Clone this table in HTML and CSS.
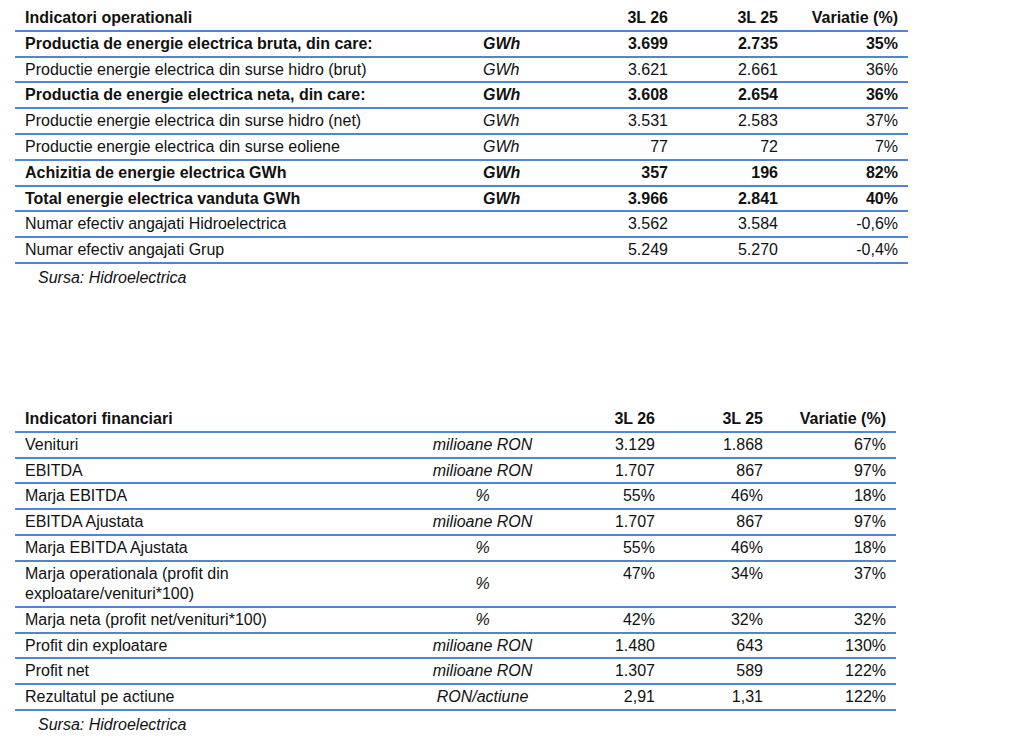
FILE: index.html
```html
<!DOCTYPE html>
<html lang="ro">
<head>
  <meta charset="UTF-8">
  <meta name="viewport" content="width=device-width, initial-scale=1.0">
  <title>Hidroelectrica - Indicatori</title>
  <link rel="stylesheet" href="styles.css">
</head>
<body>
  <!-- Indicatori operationali -->
  <section class="block block-operational">
    <table class="indicators operational">
      <colgroup>
        <col class="c-label">
        <col class="c-unit">
        <col class="c-cur">
        <col class="c-prev">
        <col class="c-var">
      </colgroup>
      <thead>
        <tr>
          <th class="label">Indicatori operationali</th>
          <th></th>
          <th class="num">3L 26</th>
          <th class="num">3L 25</th>
          <th class="num">Variatie (%)</th>
        </tr>
      </thead>
      <tbody>
        <tr class="strong">
          <td class="label">Productia de energie electrica bruta, din care:</td>
          <td class="unit">GWh</td>
          <td class="num">3.699</td>
          <td class="num">2.735</td>
          <td class="num">35%</td>
        </tr>
        <tr>
          <td class="label">Productie energie electrica din surse hidro (brut)</td>
          <td class="unit">GWh</td>
          <td class="num">3.621</td>
          <td class="num">2.661</td>
          <td class="num">36%</td>
        </tr>
        <tr class="strong">
          <td class="label">Productia de energie electrica neta, din care:</td>
          <td class="unit">GWh</td>
          <td class="num">3.608</td>
          <td class="num">2.654</td>
          <td class="num">36%</td>
        </tr>
        <tr>
          <td class="label">Productie energie electrica din surse hidro (net)</td>
          <td class="unit">GWh</td>
          <td class="num">3.531</td>
          <td class="num">2.583</td>
          <td class="num">37%</td>
        </tr>
        <tr>
          <td class="label">Productie energie electrica din surse eoliene</td>
          <td class="unit">GWh</td>
          <td class="num">77</td>
          <td class="num">72</td>
          <td class="num">7%</td>
        </tr>
        <tr class="strong">
          <td class="label">Achizitia de energie electrica GWh</td>
          <td class="unit">GWh</td>
          <td class="num">357</td>
          <td class="num">196</td>
          <td class="num">82%</td>
        </tr>
        <tr class="strong">
          <td class="label">Total energie electrica vanduta GWh</td>
          <td class="unit">GWh</td>
          <td class="num">3.966</td>
          <td class="num">2.841</td>
          <td class="num">40%</td>
        </tr>
        <tr>
          <td class="label">Numar efectiv angajati Hidroelectrica</td>
          <td class="unit"></td>
          <td class="num">3.562</td>
          <td class="num">3.584</td>
          <td class="num">-0,6%</td>
        </tr>
        <tr>
          <td class="label">Numar efectiv angajati Grup</td>
          <td class="unit"></td>
          <td class="num">5.249</td>
          <td class="num">5.270</td>
          <td class="num">-0,4%</td>
        </tr>
      </tbody>
    </table>
    <p class="source">Sursa: Hidroelectrica</p>
  </section>

  <!-- Indicatori financiari -->
  <section class="block block-financial">
    <table class="indicators financial">
      <colgroup>
        <col class="c-label">
        <col class="c-unit">
        <col class="c-cur">
        <col class="c-prev">
        <col class="c-var">
      </colgroup>
      <thead>
        <tr>
          <th class="label">Indicatori financiari</th>
          <th></th>
          <th class="num">3L 26</th>
          <th class="num">3L 25</th>
          <th class="num">Variatie (%)</th>
        </tr>
      </thead>
      <tbody>
        <tr>
          <td class="label">Venituri</td>
          <td class="unit">milioane RON</td>
          <td class="num">3.129</td>
          <td class="num">1.868</td>
          <td class="num">67%</td>
        </tr>
        <tr>
          <td class="label">EBITDA</td>
          <td class="unit">milioane RON</td>
          <td class="num">1.707</td>
          <td class="num">867</td>
          <td class="num">97%</td>
        </tr>
        <tr>
          <td class="label">Marja EBITDA</td>
          <td class="unit">%</td>
          <td class="num">55%</td>
          <td class="num">46%</td>
          <td class="num">18%</td>
        </tr>
        <tr>
          <td class="label">EBITDA Ajustata</td>
          <td class="unit">milioane RON</td>
          <td class="num">1.707</td>
          <td class="num">867</td>
          <td class="num">97%</td>
        </tr>
        <tr>
          <td class="label">Marja EBITDA Ajustata</td>
          <td class="unit">%</td>
          <td class="num">55%</td>
          <td class="num">46%</td>
          <td class="num">18%</td>
        </tr>
        <tr class="tall">
          <td class="label">Marja operationala (profit din<br>exploatare/venituri*100)</td>
          <td class="unit">%</td>
          <td class="num top">47%</td>
          <td class="num top">34%</td>
          <td class="num top">37%</td>
        </tr>
        <tr>
          <td class="label">Marja neta (profit net/venituri*100)</td>
          <td class="unit">%</td>
          <td class="num">42%</td>
          <td class="num">32%</td>
          <td class="num">32%</td>
        </tr>
        <tr>
          <td class="label">Profit din exploatare</td>
          <td class="unit">milioane RON</td>
          <td class="num">1.480</td>
          <td class="num">643</td>
          <td class="num">130%</td>
        </tr>
        <tr>
          <td class="label">Profit net</td>
          <td class="unit">milioane RON</td>
          <td class="num">1.307</td>
          <td class="num">589</td>
          <td class="num">122%</td>
        </tr>
        <tr>
          <td class="label">Rezultatul pe actiune</td>
          <td class="unit">RON/actiune</td>
          <td class="num">2,91</td>
          <td class="num">1,31</td>
          <td class="num">122%</td>
        </tr>
      </tbody>
    </table>
    <p class="source">Sursa: Hidroelectrica</p>
  </section>
</body>
</html>
```

FILE: styles.css
```css
/* General Styles */
body {
  margin: 0;
  padding: 6px 0 0 15px;
  font-family: 'Liberation Sans', Arial, sans-serif;
  font-size: 16px;
  color: #111;
  background: #fff;
}

.block-financial {
  margin-top: 118px;
}

.indicators {
  border-collapse: collapse;
  table-layout: fixed;
}

.indicators th,
.indicators td {
  padding: 2px 10px;
  line-height: 19.8px;
  border-bottom: 2px solid #5285cf;
  white-space: nowrap;
  vertical-align: middle;
}

.indicators th {
  font-weight: bold;
  text-align: left;
}

.indicators .num {
  text-align: right;
}

.indicators .unit {
  font-style: italic;
}

.indicators tr.strong td {
  font-weight: bold;
}

/* Operational table columns */
.operational {
  width: 893px;
}

.operational .c-label { width: 458px; }
.operational .c-unit { width: 95px; }
.operational .c-cur { width: 110px; }
.operational .c-prev { width: 110px; }
.operational .c-var { width: 120px; }

.operational .unit {
  text-align: left;
}

/* Financial table columns */
.financial {
  width: 881px;
}

.financial .c-label { width: 385px; }
.financial .c-unit { width: 165px; }
.financial .c-cur { width: 100px; }
.financial .c-prev { width: 108px; }
.financial .c-var { width: 123px; }

.financial .unit {
  text-align: center;
}

.financial .label {
  white-space: normal;
}

.financial tr.tall td {
  line-height: 20px;
}

.financial tr.tall td.top {
  vertical-align: top;
}

.source {
  margin: 3px 0 0 23px;
  font-style: italic;
  line-height: 22px;
}
```
